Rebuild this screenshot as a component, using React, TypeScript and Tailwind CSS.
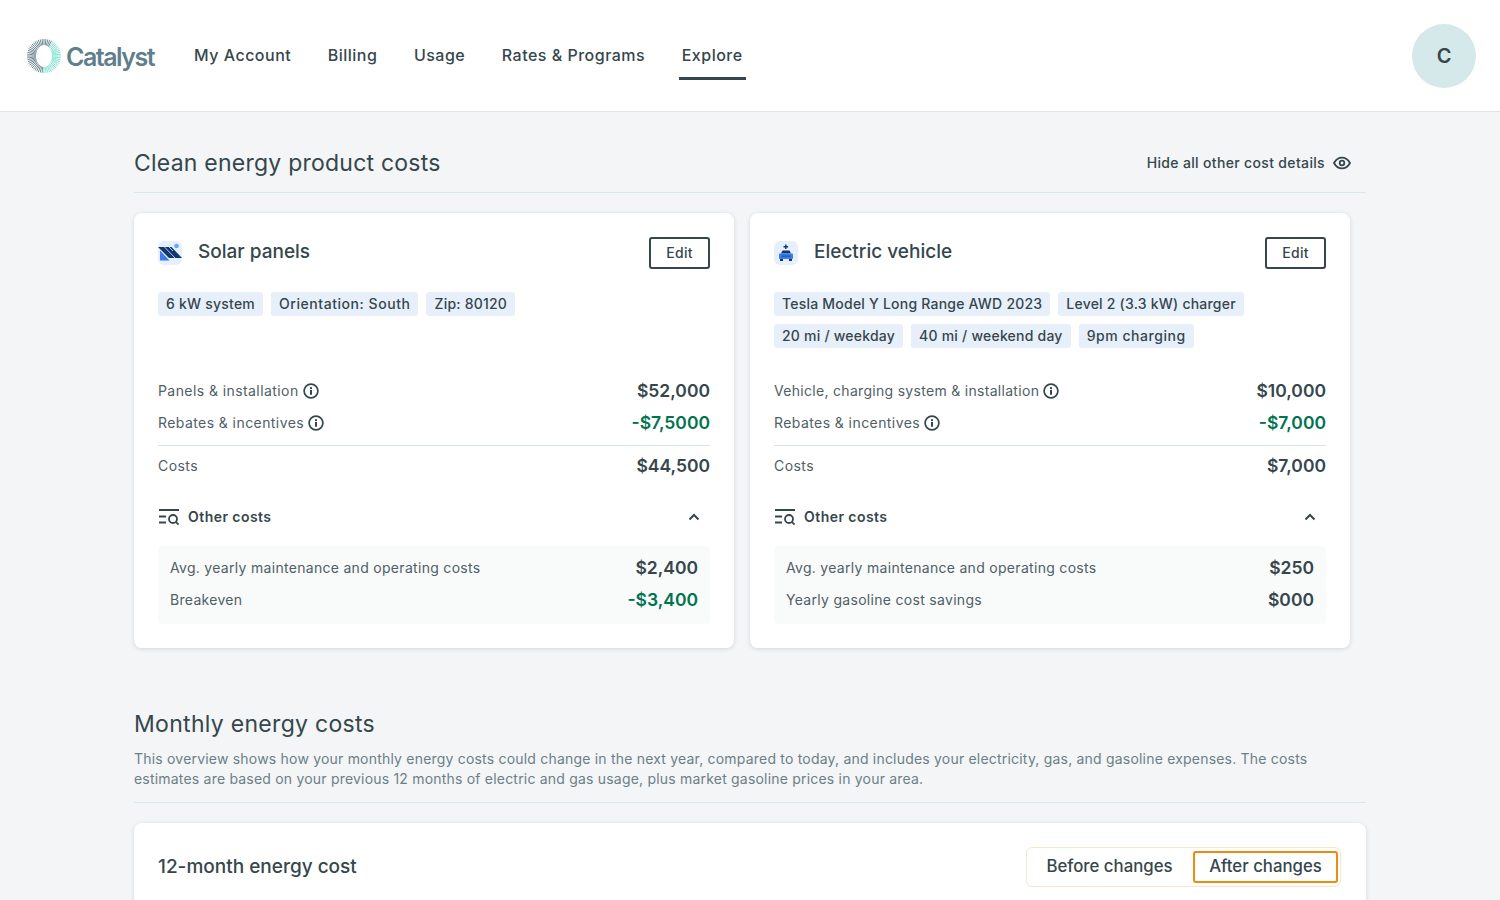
import React from "react";

const font = { fontFamily: 'Inter, "Open Sans", sans-serif' };

function Logo() {
  const lines = [];
  for (let i = 0; i < 56; i++) {
    const a = (i / 56) * Math.PI * 2;
    const cos = Math.cos(a);
    const sin = Math.sin(a);
    const inner = Math.sqrt(1 / ((cos * cos) / 64 + (sin * sin) / 121));
    const right = cos > -0.05 && sin > -0.85;
    lines.push(
      <line
        key={i}
        x1={18 + cos * inner}
        y1={18 + sin * inner}
        x2={18 + cos * 17}
        y2={18 + sin * 17}
        stroke={right ? "#7fe3cf" : "#6b8794"}
        strokeWidth="0.95"
      />
    );
  }
  return (
    <svg width="36" height="36" viewBox="0 0 36 36" className="shrink-0">
      {lines}
    </svg>
  );
}

function Info() {
  return (
    <svg width="16" height="16" viewBox="0 0 16 16" fill="none" className="shrink-0">
      <circle cx="8" cy="8" r="6.9" stroke="#35464c" strokeWidth="1.7" />
      <rect x="7" y="7" width="2" height="4.8" fill="#35464c" />
      <rect x="7" y="4.200" width="2" height="1.900" fill="#35464c" />
    </svg>
  );
}

function FilterSearch() {
  return (
    <svg width="22" height="18" viewBox="0 0 22 18" fill="none" stroke="#35464c" strokeWidth="1.8" className="shrink-0">
      <path d="M1 2h20M1 8.500h7M1 14.500h7" />
      <circle cx="15" cy="11" r="4" />
      <path d="M18 14l2.500 2.700" />
    </svg>
  );
}

function Chevron() {
  return (
    <svg width="12" height="8" viewBox="0 0 12 8" fill="none" stroke="#35464c" strokeWidth="2">
      <path d="M1.500 6.500L6 2l4.500 4.500" />
    </svg>
  );
}

function Eye() {
  return (
    <svg width="18" height="14" viewBox="0 0 18 14" fill="none" stroke="#35464c" strokeWidth="1.8">
      <path d="M1 7c2-3.600 4.800-5.400 8-5.400S15 3.400 17 7c-2 3.600-4.800 5.400-8 5.400S3 10.600 1 7z" />
      <circle cx="9" cy="7" r="2.300" />
    </svg>
  );
}

function SolarIcon() {
  return (
    <svg width="24" height="24" viewBox="0 0 24 24" fill="none" className="shrink-0">
      <rect width="24" height="24" rx="6" fill="#e6effc" />
      <circle cx="18.500" cy="5" r="2.300" fill="#6aa5f2" />
      <path d="M0 6h13.500L24 17H11L0 6z" fill="#12376e" />
      <path d="M2 9.500L11.500 19.500H2z" fill="#3b7de8" />
      <path d="M6.500 6l11 11.500M11 6l4 4" stroke="#e6effc" strokeWidth="0.8" />
    </svg>
  );
}

function CarIcon() {
  return (
    <svg width="24" height="24" viewBox="0 0 24 24" fill="none" className="shrink-0">
      <rect width="24" height="24" rx="6" fill="#e6effc" />
      <path d="M11.800 3.500v4.500M9.500 5.700h4.600" stroke="#12376e" strokeWidth="1.400" />
      <path d="M8.500 9.500h7l1.500 3H7z" fill="#12376e" />
      <rect x="5" y="12.500" width="14" height="5.500" rx="1" fill="#3b7de8" />
      <rect x="6" y="18" width="3" height="2" fill="#12376e" />
      <rect x="15" y="18" width="3" height="2" fill="#12376e" />
      <rect x="7" y="14.500" width="10" height="1.200" fill="#1d56b0" />
    </svg>
  );
}

function Tag({ children, wide }: { children: React.ReactNode; wide?: boolean }) {
  return (
    <span
      className={`h-6 flex items-center px-2 rounded-[3px] bg-[#e7f0fa] text-[14px] font-medium text-[#35464c] whitespace-nowrap ${
        wide ? "tracking-[0.55px]" : "tracking-[0.22px]"
      }`}
    >
      <span className="-mt-px">{children}</span>
    </span>
  );
}

function Row({
  label,
  value,
  green,
  info,
  wide,
}: {
  label: string;
  value: string;
  green?: boolean;
  info?: boolean;
  wide?: boolean;
}) {
  return (
    <div className="h-8 flex items-center justify-between">
      <div className={`flex items-center gap-1 text-[14px] text-[#4f6066] ${wide ? "tracking-[0.42px]" : "tracking-[0.3px]"}`}>
        <span className="-mt-px">{label}</span>
        {info && <Info />}
      </div>
      <div className={`text-[17.500px] font-semibold ${green ? "text-[#00734f]" : "text-[#35464c]"}`}>{value}</div>
    </div>
  );
}

type RowData = { label: string; value: string; green?: boolean; wide?: boolean };

function Card({
  icon,
  title,
  tags,
  rows,
  total,
  other,
}: {
  icon: React.ReactNode;
  title: string;
  tags: string[][];
  rows: RowData[];
  total: string;
  other: RowData[];
}) {
  return (
    <div className="w-[600px] h-[435px] bg-white rounded-lg shadow-[0_1px_4px_rgba(40,60,70,0.16)] p-6 flex flex-col">
      <div className="flex items-center justify-between h-8">
        <div className="flex items-center gap-4">
          {icon}
          <div className="text-[19px] font-medium text-[#35464c] -mt-px">{title}</div>
        </div>
        <button className="w-[61px] h-8 rounded-[3px] border-2 border-[#35464c] text-[14px] tracking-[0.3px] font-medium text-[#35464c] bg-white pb-[2px]">
          Edit
        </button>
      </div>
      <div className="mt-[15px] h-[65px] flex flex-col gap-2 pt-2">
        {tags.map((line, i) => (
          <div key={i} className="flex gap-2">
            {line.map((t) => (
              <Tag key={t} wide={t === "Orientation: South" || t === "9pm charging"}>
                {t}
              </Tag>
            ))}
          </div>
        ))}
      </div>
      <div className="mt-[26px]">
        {rows.map((r) => (
          <Row key={r.label} {...r} info />
        ))}
      </div>
      <div className="border-t border-[#d7e3e6] mt-[6px] pt-1">
        <Row label="Costs" value={total} wide />
      </div>
      <div className="mt-[19px] h-8 flex items-center justify-between pr-[10px]">
        <div className="flex items-center gap-2 text-[14px] tracking-[0.45px] font-semibold text-[#35464c]">
          <FilterSearch />
          <span className="-mt-px">Other costs</span>
        </div>
        <Chevron />
      </div>
      <div className="mt-[13px] bg-[#f9fafa] rounded pt-[6px] pb-2 px-3">
        {other.map((r) => (
          <Row key={r.label} {...r} />
        ))}
      </div>
    </div>
  );
}

const navItem = "h-[48px] pt-px flex items-center border-b-[3px] border-transparent";

export default function App() {
  return (
    <div className="h-[900px] overflow-hidden bg-[#f3f5f7]" style={font}>
      <header className="h-[112px] bg-white border-b border-[#e2e6e8] flex items-center justify-between pl-[26px] pr-6">
        <div className="flex items-center">
          <div className="flex items-center gap-1 w-[168px]">
            <Logo />
            <span className="text-[25px] font-semibold tracking-[-1.500px] text-[#5f7f8d] mt-1">Catalyst</span>
          </div>
          <nav className="flex gap-[36.500px] text-[16px] tracking-[0.5px] font-medium text-[#35464c]">
            <span className={navItem}>My Account</span>
            <span className={navItem}>Billing</span>
            <span className={navItem}>Usage</span>
            <span className={navItem}>Rates &amp; Programs</span>
            <span className="h-[48px] pt-px flex items-center border-b-[3px] border-[#35464c] px-[3px] -mx-[3px]">Explore</span>
          </nav>
        </div>
        <div className="w-16 h-16 rounded-full bg-[#d5e8ea] flex items-center justify-center text-[20px] font-semibold text-[#35464c]">
          C
        </div>
      </header>

      <main className="px-[134px]">
        <div className="h-[81px] pt-[34px] border-b border-[#d5e8ea] flex justify-between">
          <h2 className="text-[23px] tracking-[0.23px] leading-[34px] text-[#35464c]">Clean energy product costs</h2>
          <div className="flex items-center gap-2 h-[34px] pr-[15px] text-[14px] tracking-[0.34px] font-medium text-[#35464c]">
            <span className="-mt-px">Hide all other cost details</span>
            <Eye />
          </div>
        </div>

        <div className="mt-5 flex gap-4">
          <Card
            icon={<SolarIcon />}
            title="Solar panels"
            tags={[["6 kW system", "Orientation: South", "Zip: 80120"]]}
            rows={[
              { label: "Panels & installation", value: "$52,000", wide: true },
              { label: "Rebates & incentives", value: "-$7,5000", green: true, wide: true },
            ]}
            total="$44,500"
            other={[
              { label: "Avg. yearly maintenance and operating costs", value: "$2,400" },
              { label: "Breakeven", value: "-$3,400", green: true },
            ]}
          />
          <Card
            icon={<CarIcon />}
            title="Electric vehicle"
            tags={[
              ["Tesla Model Y Long Range AWD 2023", "Level 2 (3.3 kW) charger"],
              ["20 mi / weekday", "40 mi / weekend day", "9pm charging"],
            ]}
            rows={[
              { label: "Vehicle, charging system & installation", value: "$10,000" },
              { label: "Rebates & incentives", value: "-$7,000", green: true, wide: true },
            ]}
            total="$7,000"
            other={[
              { label: "Avg. yearly maintenance and operating costs", value: "$250" },
              { label: "Yearly gasoline cost savings", value: "$000" },
            ]}
          />
        </div>

        <h2 className="mt-[59px] text-[23px] tracking-[0.3px] leading-[34px] text-[#35464c]">Monthly energy costs</h2>
        <div className="border-b border-[#d5e8ea] pb-[13px] pt-2">
          <p className="text-[14px] tracking-[0.2px] leading-5 text-[#6c7f86]">
            This overview shows how your monthly energy costs could change in the next year, compared to today, and includes your electricity, gas, and gasoline expenses. The costs estimates are based on your previous 12 months of electric and gas usage, plus market gasoline prices in your area.
          </p>
        </div>

        <div className="mt-5 h-[200px] bg-white rounded-lg shadow-[0_1px_4px_rgba(40,60,70,0.16)] px-6 pt-6 flex justify-between items-start">
          <div className="h-10 flex items-center text-[19px] font-medium text-[#35464c]">12-month energy cost</div>
          <div className="h-10 w-[315px] mr-px rounded-md border border-[#fbe6cc] bg-white flex items-center text-[16.800px] font-medium text-[#35464c] pl-[3px] pr-[2px]">
            <span className="flex-1 text-center pr-1">Before changes</span>
            <span className="w-[145px] h-8 rounded-[3px] border-2 border-[#ee8a0e] flex items-center justify-center">After changes</span>
          </div>
        </div>
      </main>
    </div>
  );
}
